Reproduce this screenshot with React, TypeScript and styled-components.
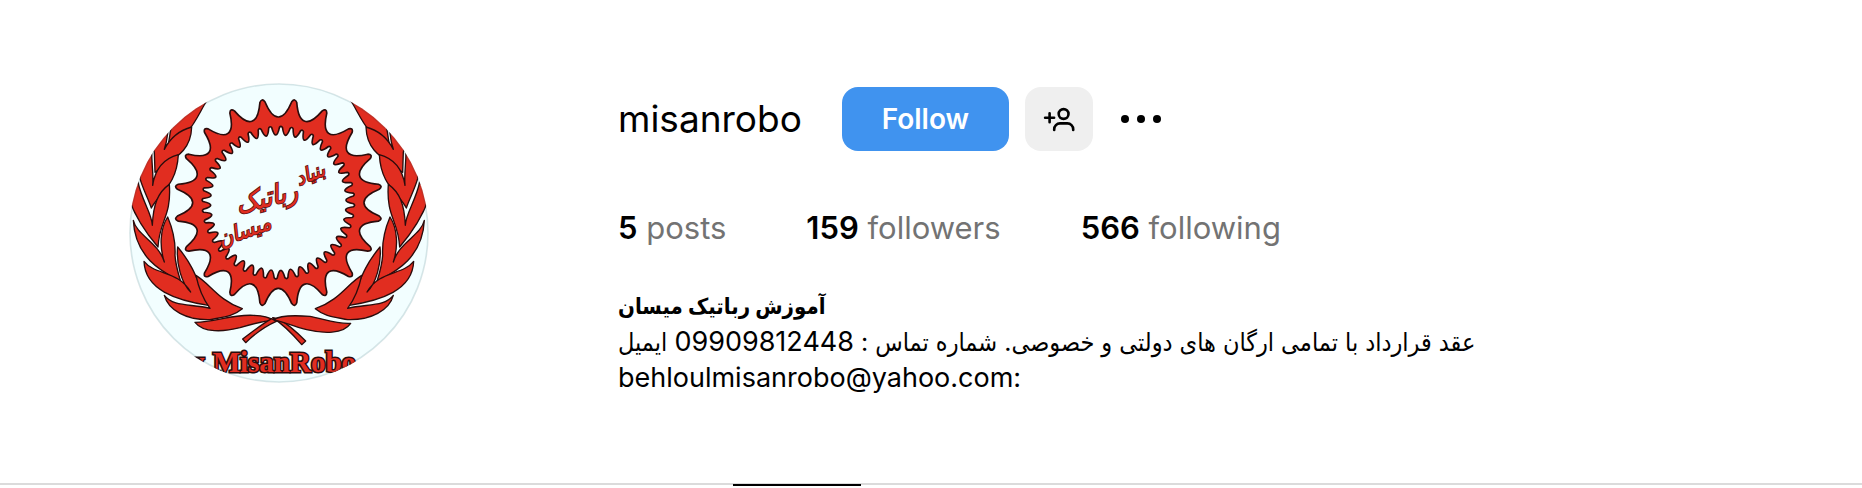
import React from 'react';
import styled, { createGlobalStyle } from 'styled-components';

const GlobalStyle = createGlobalStyle`
  body {
    margin: 0;
    background: #fff;
    color: #000;
    font-family: Inter, "DejaVu Sans Condensed", "DejaVu Sans", sans-serif;
  }
  h1, h2, p, ul { margin: 0; padding: 0; }
`;

const Header = styled.header`
  display: grid;
  grid-template-columns: minmax(300px, 558px) minmax(0, 1fr);
  column-gap: 60px;
  align-items: start;
  padding-top: 83px;
`;

const AvatarButton = styled.button`
  justify-self: center;
  display: block;
  padding: 0;
  border: 0;
  background: none;
  border-radius: 50%;
  cursor: pointer;
  svg { display: block; }
`;

const Details = styled.section`
  display: flex;
  flex-direction: column;
  padding-top: 4px;
`;

const TitleRow = styled.div`
  display: flex;
  align-items: center;
  height: 64px;
`;

const Username = styled.h2`
  font-size: 37px;
  font-weight: 400;
  line-height: 48px;
  margin-right: 40px;
`;

const Button = styled.button<{ $primary?: boolean }>`
  display: flex;
  align-items: center;
  justify-content: center;
  width: ${(p) => (p.$primary ? '167px' : '68px')};
  height: 64px;
  padding: 0;
  margin-right: 16px;
  border: 0;
  border-radius: 16px;
  background: ${(p) => (p.$primary ? '#4093ef' : '#efefef')};
  color: ${(p) => (p.$primary ? '#fff' : '#000')};
  font: 600 28px/36px Inter, sans-serif;
  cursor: pointer;
`;

const MoreButton = styled.button`
  display: flex;
  padding: 8px;
  border: 0;
  background: none;
  cursor: pointer;
`;

const Stats = styled.ul`
  display: flex;
  gap: 80px;
  margin-top: 57px;
  list-style: none;
  font-size: 31px;
  line-height: 40px;
  color: #737373;
`;

const Count = styled.span`
  font-weight: 600;
  color: #000;
`;

const Bio = styled.div`
  margin-top: 40px;
  font-size: 27px;
  line-height: 36px;
`;

const DisplayName = styled.h1`
  font-size: 22px;
  font-weight: 700;
  line-height: 36px;
  direction: rtl;
  width: fit-content;
`;

const BioLine = styled.p<{ $rtl?: boolean }>`
  direction: ${(p) => (p.$rtl ? 'rtl' : 'ltr')};
  font-size: ${(p) => (p.$rtl ? '25px' : '27px')};
  width: fit-content;
  height: 36px;
  white-space: nowrap;
`;

const Phone = styled.span`
  font-size: 27px;
`;

const Tabs = styled.nav`
  display: flex;
  justify-content: center;
  gap: 120px;
  margin-top: 87px;
  border-top: 2px solid #dbdbdb;
`;

const Tab = styled.a<{ $active?: boolean }>`
  width: ${(p) => (p.$active ? '128px' : '148px')};
  margin-top: -1px;
  border-top: 2px solid ${(p) => (p.$active ? '#000' : 'transparent')};
`;

const CX = 505;
const CY = 397;

function polar(radius: number, degrees: number) {
  const a = (degrees * Math.PI) / 180;
  return `${(CX + radius * Math.sin(a)).toFixed(1)},${(CY - radius * Math.cos(a)).toFixed(1)}`;
}

/* Closed ring of teeth: a narrow rounded cap whose flanks flare out into a wide valley. */
function ring(count: number, tip: number, valley: number, start: number, cap: number, bow: number) {
  const step = 360 / count;
  const h = tip - valley;
  let d = '';
  for (let i = 0; i < count; i++) {
    const a = start + i * step;
    const mid = a + step / 2;
    const c = step * cap;
    const flare = c + step * 0.1;
    if (i === 0) d += `M${polar(tip - h * 0.12, a - c)}`;
    d += `Q${polar(tip + h * 0.12, a)} ${polar(tip - h * 0.12, a + c)}`;
    d += `C${polar(tip - h * 0.7, a + flare)} ${polar(valley, mid - step * bow)} ${polar(valley, mid)}`;
    d += `C${polar(valley, mid + step * bow)} ${polar(tip - h * 0.7, a + step - flare)} ${polar(tip - h * 0.12, a + step - c)}`;
  }
  return d + 'Z';
}

const gearOuter = ring(20, 312, 257, 9, 0.08, 0.2);
const gearInner = ring(44, 229, 203, 2, 0.14, 0.12);

const leaves = [
  'M290,92C262,135 240,205 176,217L184,165L190,110Z',
  'M245,170C215,178 185,195 163,237C172,210 172,195 174,180L120,220L133,245L135,306C200,260 243,240 245,170Z',
  'M205,253C160,265 135,300 128,345C131,310 125,290 125,240L80,270L90,325C100,360 115,385 124,413C150,365 200,345 205,253Z',
  'M178,342C145,365 130,400 127,465C126,430 95,390 84,335L55,380C75,440 110,490 144,530C148,450 185,440 178,342Z',
  'M70,450C80,495 145,515 163,575C148,530 150,475 173,440C190,480 197,520 195,555C197,585 205,610 212,633C170,610 75,570 70,450Z',
  'M102,573C135,615 205,600 242,665C215,640 198,580 203,530C245,580 255,610 295,705C200,690 105,660 102,573Z',
  'M163,675C190,710 240,700 300,714C275,680 265,650 258,615C300,640 325,690 397,715C370,738 340,740 300,748C230,750 175,720 163,675Z',
];

function Wreath() {
  return (
    <>
      {leaves.map((d) => (
        <path key={d} d={d} />
      ))}
    </>
  );
}

function Emblem() {
  return (
    <svg width="300" height="300" viewBox="57 38 900 900" aria-hidden="true">
      <defs>
        <clipPath id="disc">
          <circle cx="507" cy="488" r="449" />
        </clipPath>
      </defs>
      <g clipPath="url(#disc)">
        <circle cx="507" cy="488" r="449" fill="#f2feff" />
        <g fill="#e12d20" stroke="#2b0c0c" strokeWidth="4" strokeLinejoin="round">
          <path d={gearOuter + gearInner} fillRule="evenodd" strokeWidth="5" />
          <Wreath />
          <g transform="translate(1013 0) scale(-1 1)">
            <Wreath />
          </g>
          <path d="M488,742C530,770 555,800 575,823L587,812C565,790 540,765 505,745Z" />
          <path d="M255,756C320,755 360,732 430,735C460,736 480,742 490,750C460,752 430,760 390,772C340,785 280,788 255,756Z" />
          <path d="M492,748C510,734 560,735 600,738C640,745 680,762 722,759C700,792 640,790 590,778C550,768 520,755 498,750Z" />
          <path d="M485,745C450,765 420,790 398,806L407,817C435,790 460,770 499,753Z" />
        </g>
        <g
          fill="#e12d20"
          stroke="#2b0c0c"
          strokeWidth="9"
          paintOrder="stroke"
          fontFamily="'Liberation Serif', serif"
          fontSize="87"
          fontWeight="700"
        >
          <text x="240" y="906">y</text>
          <text x="308" y="906">MisanRobo</text>
        </g>
        <g
          fill="#e12d20"
          stroke="#5a1414"
          strokeWidth="5"
          paintOrder="stroke"
          textAnchor="middle"
          fontFamily="'DejaVu Sans Condensed', 'DejaVu Sans', sans-serif"
          fontStyle="italic"
        >
          <text transform="translate(608 330) rotate(-22)" fontSize="60">بنیاد</text>
          <text transform="translate(476 408) rotate(-14)" fontSize="82">رباتیک</text>
          <text transform="translate(410 502) rotate(-20)" fontSize="66">میسان</text>
        </g>
      </g>
      <circle cx="507" cy="488" r="447" fill="none" stroke="#0a3c46" strokeOpacity="0.13" strokeWidth="5" />
    </svg>
  );
}

function AddPersonIcon() {
  return (
    <svg width="32" height="32" viewBox="0 0 32 32" fill="none" stroke="#000" strokeWidth="2.6" strokeLinecap="round" aria-hidden="true">
      <circle cx="20.6" cy="11" r="4.9" />
      <path d="M11.2 27v-.8a5.8 5.8 0 0 1 5.8-5.8h7.4a5.8 5.8 0 0 1 5.8 5.8v.8M6.6 10.2v9M2.1 14.7h9" />
    </svg>
  );
}

function MoreIcon() {
  return (
    <svg width="48" height="48" viewBox="0 0 48 48" aria-hidden="true">
      <circle cx="8" cy="24" r="4" />
      <circle cx="24" cy="24" r="4" />
      <circle cx="40" cy="24" r="4" />
    </svg>
  );
}

const stats = [
  { count: '5', label: 'posts' },
  { count: '159', label: 'followers' },
  { count: '566', label: 'following' },
];

export default function App() {
  return (
    <>
      <GlobalStyle />
      <main>
        <Header>
          <AvatarButton aria-label="Profile photo">
            <Emblem />
          </AvatarButton>
          <Details>
            <TitleRow>
              <Username>misanrobo</Username>
              <Button $primary>Follow</Button>
              <Button aria-label="Similar accounts">
                <AddPersonIcon />
              </Button>
              <MoreButton aria-label="Options">
                <MoreIcon />
              </MoreButton>
            </TitleRow>
            <Stats>
              {stats.map((s) => (
                <li key={s.label}>
                  <Count>{s.count}</Count> {s.label}
                </li>
              ))}
            </Stats>
            <Bio>
              <DisplayName>آموزش رباتیک میسان</DisplayName>
              <BioLine $rtl>
                عقد قرارداد با تمامی ارگان های دولتی و خصوصی. شماره تماس : <Phone>09909812448</Phone> ایمیل
              </BioLine>
              <BioLine>behloulmisanrobo@yahoo.com:</BioLine>
            </Bio>
          </Details>
        </Header>
        <Tabs>
          <Tab href="#posts" aria-label="Posts" $active />
          <Tab href="#tagged" aria-label="Tagged" />
        </Tabs>
      </main>
    </>
  );
}
